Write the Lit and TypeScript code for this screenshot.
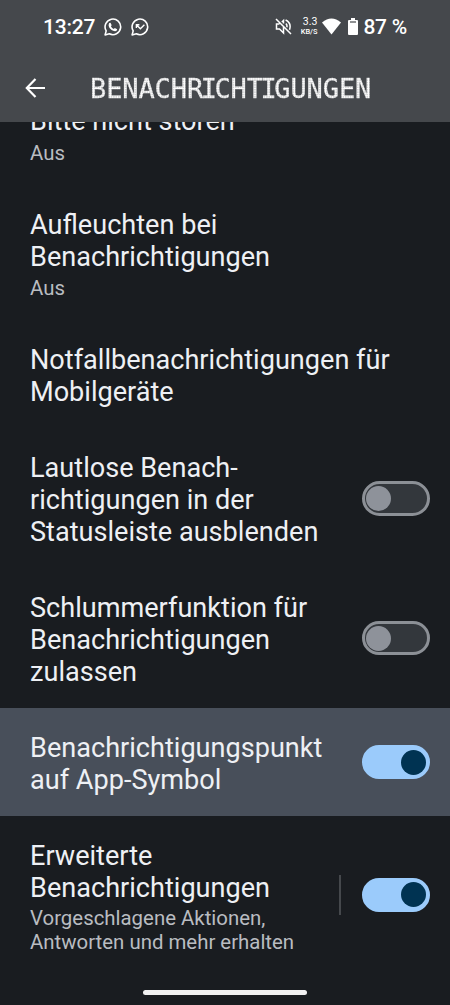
import { LitElement, html, css, svg, nothing } from "lit";
import { customElement, property } from "lit/decorators.js";

@customElement("toggle-switch")
class ToggleSwitch extends LitElement {
  @property({ type: Boolean }) on = false;
  static styles = css`
    :host { display: block; flex: none; }
    .track { box-sizing: border-box; width: 68.5px; height: 34.5px; border-radius: 18px; border: 3px solid #8c9096; background: #33373c; display: flex; align-items: center; padding: 0 1.5px; }
    .thumb { width: 25px; height: 25px; border-radius: 50%; background: #8e929a; }
    .on { background: #9bcbfb; border-color: #9bcbfb; justify-content: flex-end; }
    .on .thumb { background: #003352; }
  `;
  render() {
    return html`<div class="track ${this.on ? "on" : ""}"><div class="thumb"></div></div>`;
  }
}

interface Row { cls: string; lines: string[]; sub?: string[]; on?: boolean; divider?: boolean }

const rows: Row[] = [
  { cls: "r0", lines: ["Bitte nicht stören"], sub: ["Aus"] },
  { cls: "r1", lines: ["Aufleuchten bei", "Benachrichtigungen"], sub: ["Aus"] },
  { cls: "r2", lines: ["Notfallbenachrichtigungen für", "Mobilgeräte"] },
  { cls: "r3", lines: ["Lautlose Benach-", "richtigungen in der", "Statusleiste ausblenden"], on: false },
  { cls: "r4", lines: ["Schlummerfunktion für", "Benachrichtigungen", "zulassen"], on: false },
  { cls: "r5", lines: ["Benachrichtigungspunkt", "auf App-Symbol"], on: true },
  { cls: "r6", lines: ["Erweiterte", "Benachrichtigungen"], sub: ["Vorgeschlagene Aktionen,", "Antworten und mehr erhalten"], on: true, divider: true },
];

const bubble = svg`<path d="M1.1 16.9 2.2 12.9A7.8 7.8 0 1 1 5.3 15.8Z" fill="none" stroke="#fff" stroke-width="1.6" stroke-linejoin="round"/>`;

@customElement("app-root")
class AppRoot extends LitElement {
  static styles = css`
    :host { display: flex; flex-direction: column; height: 1005px; overflow: hidden; background: #191c20; color: #eef0f4; font-family: Roboto, sans-serif; }
    header { flex: none; height: 122px; background: #45484c; color: #fff; }
    .status { height: 53px; box-sizing: border-box; display: flex; align-items: center; padding: 0 43px; }
    .time { font-size: 21px; font-weight: 500; width: 61px; letter-spacing: -.2px; }
    .msg { margin-right: 9px; display: block; }
    .spring { flex: 1; }
    .rate { display: flex; flex-direction: column; align-items: flex-end; font-size: 10.5px; line-height: 10px; margin: 0 5px 0 7px; width: 18px; }
    .rate span:last-child { font-size: 7.4px; line-height: 9px; font-weight: 500; }
    .battery { margin-left: 7px; }
    .pct { font-size: 21px; font-weight: 500; margin-left: 5px; white-space: nowrap; letter-spacing: -.25px; }
    .bar { height: 69px; display: flex; align-items: center; padding-left: 25px; }
    .bar svg { display: block; }
    h1 { margin: 3px 0 0 44px; font: 400 27px/32px "DejaVu Sans Mono", monospace; letter-spacing: -.1px; white-space: nowrap; color: transparent; -webkit-text-stroke: .4px transparent; -webkit-background-clip: text; background-clip: text; background-image: radial-gradient(circle, #fff 0 .9px, #ffffff50 1.6px); background-size: 2.4px 2.4px; }
    .i { letter-spacing: -2.5px; }
    main { flex: none; }
    .row { display: flex; align-items: center; padding: 25px 20px 19.4px 30px; }
    .text { flex: 1; }
    .title { font-size: 27.1px; line-height: 31.8px; white-space: nowrap; }
    .sub { font-size: 20.4px; line-height: 24px; color: #b9bcc1; white-space: nowrap; padding-top: 3px; }
    .r0 { padding-top: 0; margin-top: -15.8px; padding-bottom: 20.4px; }
    .r1 { padding-top: 24.5px; padding-bottom: 19.9px; }
    .clip { height: 868px; overflow: hidden; }
    .r5 { background: #484f5a; }
    .r6 .sub { padding-top: 1.5px; }
    toggle-switch { margin-bottom: 5.4px; }
    .divider { width: 1.5px; height: 40px; background: #45484c; margin: 0 21px 4.5px 0; }
    footer { display: flex; justify-content: center; }
    .pill { width: 164px; height: 5px; border-radius: 3px; background: #f1f1f1; }
  `;
  render() {
    return html`
      <header>
        <div class="status">
          <span class="time">13:27</span>
          <svg class="msg" width="18" height="18" viewBox="0 0 18 18">${bubble}<path d="M5.2 5.1 6.5 4.7 7.7 7.2 6.9 8.3Q7.8 10.2 9.8 11.1L10.8 10.1 13.2 11.3Q13 13.2 11.2 13.3C7.8 13.1 4.6 9.8 4.6 7Z" fill="#fff"/></svg>
          <svg class="msg" width="18" height="18" viewBox="0 0 18 18">${bubble}<path d="M5.4 10V6.8H8.4M5.6 7 9.4 10.7 13.4 6.8" fill="none" stroke="#fff" stroke-width="1.4"/></svg>
          <span class="spring"></span>
          <svg width="17" height="17" viewBox="0 0 17 17" fill="none" stroke="#fff" stroke-width="1.5"><path d="M4.5 6H1.5V11H4.5L8.5 15V8.7M6.8 4 8.5 2.5V5.5M1 1 16 16M10.8 5.6Q12.5 7 11.8 9.2M10.6 2Q16.8 5 14.5 11.8"/></svg>
          <span class="rate"><span>3.3</span><span>KB/S</span></span>
          <svg width="19" height="17" viewBox="0 0 19 17"><path d="M0 4.5Q9.5-3.7 19 4.5L9.5 16.5Z" fill="#fff"/></svg>
          <svg class="battery" width="10" height="17" viewBox="0 0 10 17"><path d="M3 0H7V2H9Q10 2 10 3V16Q10 17 9 17H1Q0 17 0 16V3Q0 2 1 2H3Z" fill="#fff"/><path d="M2 4H8" stroke="#45484c" stroke-width="1.2"/></svg>
          <span class="pct">87 %</span>
        </div>
        <div class="bar">
          <svg width="21" height="20" viewBox="0 0 21 20" fill="none" stroke="#fff" stroke-width="2.2"><path d="M20 10H2M10.5 1 1.8 10 10.5 19"/></svg>
          <h1>BENACH<span class="i">RI</span>CH<span class="i">TI</span>GUNGEN</h1>
        </div>
      </header>
      <div class="clip"><main>
        ${rows.map((r) => html`<section class="row ${r.cls}">
          <div class="text">
            <div class="title">${r.lines.map((l) => html`<div>${l}</div>`)}</div>
            ${r.sub ? html`<div class="sub">${r.sub.map((l) => html`<div>${l}</div>`)}</div>` : nothing}
          </div>
          ${r.divider ? html`<div class="divider"></div>` : nothing}
          ${r.on === undefined ? nothing : html`<toggle-switch ?on=${r.on}></toggle-switch>`}
        </section>`)}
      </main></div>
      <footer><div class="pill"></div></footer>`;
  }
}
